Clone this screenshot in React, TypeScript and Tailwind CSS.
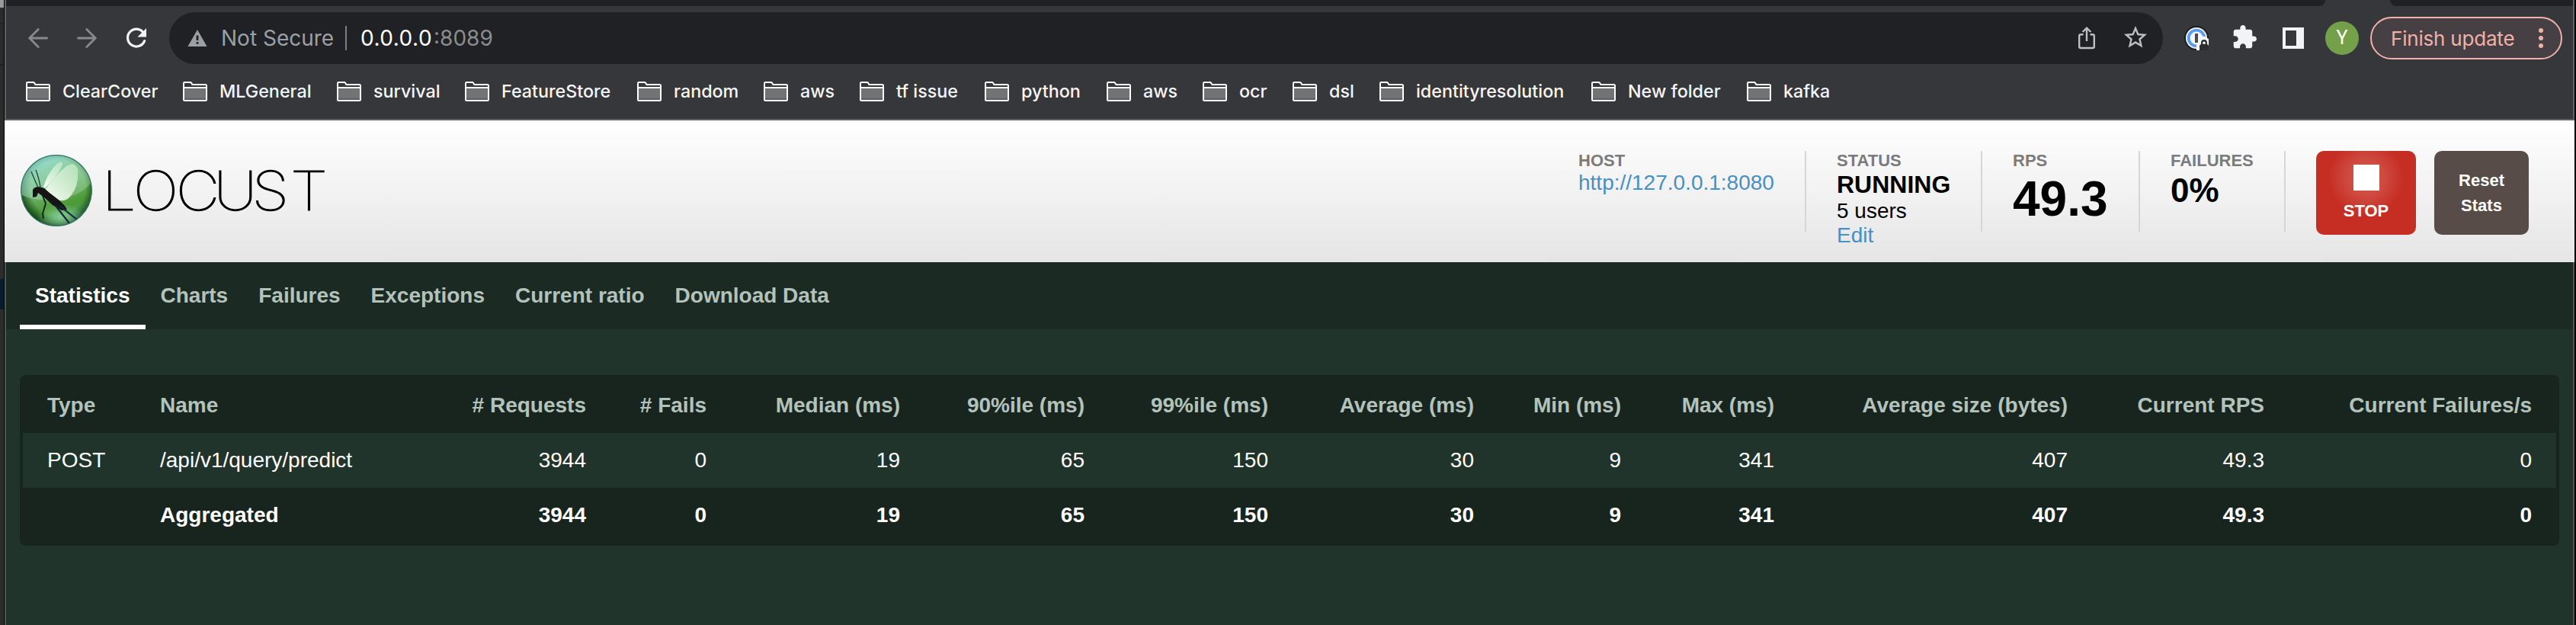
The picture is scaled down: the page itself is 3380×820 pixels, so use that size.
import type { ReactNode } from "react";

const bookmarks: { label: string; width: string }[] = [
  { label: "ClearCover", width: "w-[206px]" },
  { label: "MLGeneral", width: "w-[202px]" },
  { label: "survival", width: "w-[168px]" },
  { label: "FeatureStore", width: "w-[226px]" },
  { label: "random", width: "w-[166px]" },
  { label: "aws", width: "w-[126px]" },
  { label: "tf issue", width: "w-[164px]" },
  { label: "python", width: "w-[160px]" },
  { label: "aws", width: "w-[126px]" },
  { label: "ocr", width: "w-[118px]" },
  { label: "dsl", width: "w-[114px]" },
  { label: "identityresolution", width: "w-[278px]" },
  { label: "New folder", width: "w-[204px]" },
  { label: "kafka", width: "w-[160px]" },
];

const tabs = ["Statistics", "Charts", "Failures", "Exceptions", "Current ratio", "Download Data"];

const columns: { title: string; width: string }[] = [
  { title: "Type", width: "w-[148px]" },
  { title: "Name", width: "w-[410px]" },
  { title: "# Requests", width: "w-[213px]" },
  { title: "# Fails", width: "w-[158px]" },
  { title: "Median (ms)", width: "w-[254px]" },
  { title: "90%ile (ms)", width: "w-[242px]" },
  { title: "99%ile (ms)", width: "w-[241px]" },
  { title: "Average (ms)", width: "w-[270px]" },
  { title: "Min (ms)", width: "w-[193px]" },
  { title: "Max (ms)", width: "w-[201px]" },
  { title: "Average size (bytes)", width: "w-[385px]" },
  { title: "Current RPS", width: "w-[258px]" },
  { title: "Current Failures/s", width: "w-[351px]" },
];

const values = ["3944", "0", "19", "65", "150", "30", "9", "341", "407", "49.3", "0"];

function FolderIcon() {
  return (
    <svg width="32" height="26" viewBox="0 0 32 26" fill="none" className="shrink-0">
      <path d="M1 8h30v16.2H1z" fill="#727375" />
      <path d="M2 22h28v2H2z" fill="#5c5d60" />
      <path
        d="M1 23.5V2.2Q1 1 2.2 1H9.6Q10.6 1 11.2 2L12.4 4H29.5Q31 4 31 5.5V23.5Q31 25 29.5 25H2.5Q1 25 1 23.5ZM1 8H31"
        stroke="#fff"
        strokeWidth="2"
      />
    </svg>
  );
}

function TabStrip() {
  return (
    <div className="flex h-2 bg-[#36373b]">
      <div className="w-[3043px] rounded-br-[8px] bg-[#202124]" />
      <div className="w-[85px]" />
      <div className="grow rounded-bl-[8px] bg-[#202124]" />
    </div>
  );
}

function Toolbar() {
  return (
    <div className="flex h-[84px] items-center">
      <svg width="26" height="26" viewBox="0 0 26 26" className="ml-[29px] shrink-0" fill="none" stroke="#88898b" strokeWidth="2.8" strokeLinecap="round">
        <path d="M24.6 13H1.8M13.2 1.6 1.8 13l11.4 11.4" />
      </svg>
      <svg width="26" height="26" viewBox="0 0 26 26" className="ml-[38px] shrink-0" fill="none" stroke="#88898b" strokeWidth="2.8" strokeLinecap="round">
        <path d="M1.4 13H24.2M12.8 1.6 24.2 13 12.8 24.4" />
      </svg>
      <svg width="28" height="28" viewBox="0 0 28 28" className="ml-[38px] shrink-0" fill="none">
        <path d="M22.6 6.2A11.4 11.4 0 1 0 24.6 17.6" stroke="#f1f3f4" strokeWidth="3.2" strokeLinecap="round" />
        <path d="M27 1v11.6H15.4z" fill="#f1f3f4" />
      </svg>
      <div className="ml-[29px] flex h-[68px] w-[2616px] shrink-0 items-center rounded-full bg-[#202124] pl-6 text-[28px] leading-[34px] whitespace-nowrap">
        <svg width="26" height="22" viewBox="0 0 26 22" className="shrink-0">
          <path d="M13 0 25.6 22H.4z" fill="#9aa0a6" />
          <path d="M11.6 7.5h2.8v6.5h-2.8zM11.6 16h2.8v2.8h-2.8z" fill="#202124" />
        </svg>
        <span className="ml-[18px] w-[163px] text-[#9aa0a6]">Not Secure</span>
        <span className="h-8 w-0.5 bg-[#7f8183]" />
        <span className="ml-[18px] w-[96px] tracking-[0.5px] text-white">0.0.0.0</span>
        <span className="text-[#8b8d90]">:8089</span>
        <svg width="26" height="32" viewBox="0 0 26 32" className="mr-[36px] ml-auto shrink-0" fill="none" stroke="#bdbfc1" strokeWidth="2.4">
          <path d="M8.5 11.2H5.2Q3.2 11.2 3.2 13.2V27Q3.2 29 5.2 29H20.8Q22.8 29 22.8 27V13.2Q22.8 11.2 20.8 11.2H17.5M13 20V3M7.6 8 13 2.6 18.4 8" />
        </svg>
        <svg width="30" height="30" viewBox="2 2 20 20" className="mr-[21px] shrink-0 -translate-y-[1px]" fill="#bdbfc1">
          <path d="M22 9.24l-7.19-.62L12 2 9.19 8.63 2 9.24l5.46 4.73L5.82 21 12 17.27 18.18 21l-1.63-7.03L22 9.24zM12 15.4l-3.76 2.27 1-4.28-3.32-2.88 4.38-.38L12 6.1l1.71 4.04 4.38.38-3.32 2.88 1 4.28L12 15.4z" />
        </svg>
      </div>
      <svg width="34" height="34" viewBox="0 0 34 34" className="ml-[27px] shrink-0">
        <circle cx="17" cy="17" r="16" fill="#1b1c1e" />
        <circle cx="17" cy="17" r="14" fill="#f4f5f7" />
        <circle cx="17" cy="17" r="10.3" fill="none" stroke="#5a9df5" strokeWidth="3.8" />
        <rect x="15" y="11" width="4" height="12" fill="#4a4b4e" />
        <path d="M17 24h4v-6q2-4 7-3l5 3v15H17z" fill="#f4f5f7" />
        <path d="M21 33v-5.5q0-2 2-2.6V23q0-4 4-4t4 4v1.9q2 .6 2 2.6V33zM25.2 24.8h3.6V23q0-1.6-1.8-1.6T25.2 23z" fill="#2c2d30" fillRule="evenodd" />
      </svg>
      <svg width="32" height="32" viewBox="1.5 1 22.2 22.2" className="ml-[31px] shrink-0 -translate-y-[1px]" fill="#f1f3f4">
        <path d="M20.5 11H19V7c0-1.1-.9-2-2-2h-4V3.5C13 2.12 11.88 1 10.5 1S8 2.12 8 3.5V5H4c-1.1 0-1.99.9-1.99 2v3.8H3.5c1.49 0 2.7 1.21 2.7 2.7s-1.21 2.7-2.7 2.7H2V20c0 1.1.9 2 2 2h3.8v-1.5c0-1.49 1.21-2.7 2.7-2.7 1.49 0 2.7 1.21 2.7 2.7V22H17c1.1 0 2-.9 2-2v-4h1.5c1.38 0 2.5-1.12 2.5-2.5S21.88 11 20.5 11z" />
      </svg>
      <div className="ml-[33px] flex h-7 w-7 shrink-0 bg-[#f1f3f4] py-1 pl-1">
        <div className="h-5 w-3.5 bg-[#36373b]" />
      </div>
      <div className="ml-7 flex h-11 w-11 shrink-0 items-center justify-center rounded-full bg-[#74a04a] font-[Roboto] text-[25px] text-white">Y</div>
      <div className="ml-[15px] flex h-14 w-[252px] shrink-0 items-center rounded-full border-2 border-[#f0b1aa] bg-[#464044] pl-[25px] text-[26px] tracking-[-0.2px] whitespace-nowrap text-[#f0b1aa]">
        <span className="w-[194px]">Finish update</span>
        <span className="flex flex-col gap-1">
          <span className="h-1.5 w-1.5 rounded-full bg-[#f0b1aa]" />
          <span className="h-1.5 w-1.5 rounded-full bg-[#f0b1aa]" />
          <span className="h-1.5 w-1.5 rounded-full bg-[#f0b1aa]" />
        </span>
      </div>
    </div>
  );
}

function Bookmarks() {
  return (
    <div className="flex h-16 pt-[15px] pl-[26px]">
      {bookmarks.map((b, i) => (
        <div key={i} className={`${b.width} flex h-[26px] shrink-0 items-center gap-4 text-[23.3px] font-medium whitespace-nowrap text-[#f4f5f6]`}>
          <FolderIcon />
          <span>{b.label}</span>
        </div>
      ))}
    </div>
  );
}

function Logo() {
  return (
    <svg width="410" height="98" viewBox="0 0 410 98" className="shrink-0">
      <defs>
        <linearGradient id="globe" x1="0.25" y1="0" x2="0.6" y2="1">
          <stop offset="0" stopColor="#86d6d2" />
          <stop offset="0.25" stopColor="#7cc083" />
          <stop offset="0.55" stopColor="#66ab5c" />
          <stop offset="0.75" stopColor="#4c9a35" />
          <stop offset="1" stopColor="#4f9f78" />
        </linearGradient>
        <radialGradient id="rim" cx="0.52" cy="0.46" r="0.54">
          <stop offset="0.72" stopColor="#06300a" stopOpacity="0" />
          <stop offset="1" stopColor="#052808" stopOpacity="0.8" />
        </radialGradient>
        <linearGradient id="shine" x1="0" y1="0" x2="1" y2="1">
          <stop offset="0" stopColor="#94dfe0" stopOpacity="0.7" />
          <stop offset="1" stopColor="#b8e4b0" stopOpacity="0.25" />
        </linearGradient>
        <radialGradient id="glow" cx="0.5" cy="0.5" r="0.5">
          <stop offset="0" stopColor="#8ed49a" stopOpacity="0.9" />
          <stop offset="1" stopColor="#8ed49a" stopOpacity="0" />
        </radialGradient>
        <linearGradient id="wing" x1="0" y1="1" x2="0.6" y2="0">
          <stop offset="0" stopColor="#ffffff" stopOpacity="0.95" />
          <stop offset="1" stopColor="#e4f8e0" stopOpacity="0.55" />
        </linearGradient>
        <clipPath id="disc">
          <circle cx="49" cy="49" r="46.5" />
        </clipPath>
      </defs>
      <circle cx="49" cy="49" r="46.5" fill="url(#globe)" />
      <g clipPath="url(#disc)">
        <circle cx="49" cy="49" r="46.5" fill="url(#rim)" />
        <ellipse cx="55" cy="84" rx="32" ry="18" fill="url(#glow)" />
        <path d="M2 54Q18 63 46 61 82 57 95 38L92 20Q78 2 49 2 14 4 3 36Z" fill="url(#shine)" />
        <path d="M32 44Q36 30 46 18 54 9 57 13 57 22 34 46Z" fill="url(#wing)" />
        <path d="M35 47Q46 30 62 17 74 10 77 22 79 44 66 58 56 68 40 55Z" fill="url(#wing)" />
        <path d="M18 48Q20 44 26 44L33 46 40 52 53 62 60 69 63 74 56 75 44 68 33 58 25 52 23 57 18 58Z" fill="#151515" />
        <path d="M25 45Q20 34 16 24M28 45Q26 32 22 22" stroke="#244a3e" strokeWidth="1.4" fill="none" />
        <path d="M31 56 35 66 31 79 32 86" stroke="#13251b" strokeWidth="2" fill="none" />
        <path d="M48 69 66 92M53 69 76 87" stroke="#17283c" strokeWidth="2.2" fill="none" />
      </g>
      <circle cx="49" cy="49" r="46.3" fill="none" stroke="#2c7663" strokeWidth="1.2" />
      <text
        x="97.1 133.8 183.7 227.9 272.7 317.9"
        y="75"
        transform="scale(1.12 1)"
        className="fill-black stroke-black font-[Inter] text-[71px] font-thin"
        strokeWidth="1.2"
      >
        LOCUST
      </text>
    </svg>
  );
}

function Stat({ label, className, children }: { label: string; className: string; children: ReactNode }) {
  return (
    <div className={`${className} h-[106px] shrink-0 border-r-2 border-[#d6d6d6] whitespace-nowrap`}>
      <div className="text-[22px] leading-[25px] font-bold text-[#7b7b7b]">{label}</div>
      {children}
    </div>
  );
}

function Header() {
  return (
    <header className="-mx-0.5 flex h-[186px] bg-linear-to-b from-white to-[#e5e5e5] pr-[60px] pl-[19px]">
      <div className="mt-[43px]">
        <Logo />
      </div>
      <div className="mt-10 ml-auto flex">
        <Stat label="HOST" className="w-[299px]">
          <div className="text-[28px] leading-[33px] text-[#4790c3]">http://127.0.0.1:8080</div>
        </Stat>
        <Stat label="STATUS" className="w-[231px] pl-10">
          <div className="text-[32px] leading-[38px] font-bold text-black">RUNNING</div>
          <div className="text-[28px] leading-8 text-black">5 users</div>
          <div className="text-[28px] leading-8 text-[#4790c3]">Edit</div>
        </Stat>
        <Stat label="RPS" className="w-[207px] pl-10">
          <div className="text-[64px] leading-[76px] font-bold text-black">49.3</div>
        </Stat>
        <Stat label="FAILURES" className="w-[191px] pl-10">
          <div className="text-[44px] leading-[53px] font-bold text-black">0%</div>
        </Stat>
        <button className="ml-10 flex h-[110px] w-[131px] shrink-0 flex-col items-center rounded-[10px] bg-[radial-gradient(circle_at_50%_32%,#d2584e_0px,#cf4c42_22px,#c62d23_50px)] pt-[18px] text-[22px] leading-[33px] font-bold text-white">
          <span className="h-[34px] w-[34px] bg-white" />
          <span className="mt-2.5">STOP</span>
        </button>
        <button className="ml-6 flex h-[110px] w-[124px] shrink-0 flex-col items-center rounded-[10px] bg-[#584c49] pt-[22px] text-[22px] leading-[33px] font-bold text-white">
          <span>Reset</span>
          <span>Stats</span>
        </button>
      </div>
    </header>
  );
}

function NavTabs() {
  return (
    <nav className="flex h-[88px] bg-[#1b2a23] pl-[18px] text-[28px] leading-[88px] font-bold whitespace-nowrap">
      {tabs.map((t, i) => (
        <div key={t} className={i === 0 ? "h-[88px] border-b-6 border-white px-5 text-white" : "px-5 text-[#b3c3bc]"}>
          {t}
        </div>
      ))}
    </nav>
  );
}

function StatsTable() {
  const align = (i: number) => (i < 2 ? "text-left" : "text-right");
  return (
    <div className="mt-[60px] ml-[18px] w-[3332px] rounded-[8px] bg-[#18251f] p-1">
      <table className="w-full table-fixed border-collapse text-[28px] leading-[72px] whitespace-nowrap">
        <thead>
          <tr className="h-[72px] text-[#b3c3bc]">
            {columns.map((c, i) => (
              <th key={c.title} className={`${c.width} ${align(i)} ${i < 2 ? "px-8" : "pr-8"} py-0 font-bold`}>
                {c.title}
              </th>
            ))}
          </tr>
        </thead>
        <tbody className="text-white">
          <tr className="h-[72px] bg-[#21342c]">
            {["POST", "/api/v1/query/predict", ...values].map((v, i) => (
              <td key={i} className={`${align(i)} px-8 py-0`}>{v}</td>
            ))}
          </tr>
          <tr className="h-[72px] font-bold">
            {["", "Aggregated", ...values].map((v, i) => (
              <td key={i} className={`${align(i)} px-8 py-0`}>{v}</td>
            ))}
          </tr>
        </tbody>
      </table>
    </div>
  );
}

export default function App() {
  return (
    <div className="flex h-[820px] w-[3380px] overflow-hidden bg-black">
      <div className="flex w-[5px] shrink-0 flex-col overflow-hidden bg-[#2c2c2d]">
        <div className="h-2.5 bg-[#9a9a9a]" />
        <div className="mt-5 h-0.5 bg-[#222223]" />
        <div className="mt-[52px] h-0.5 bg-[#222223]" />
        <div className="mt-[280px] h-10 bg-[#071c2d]" />
      </div>
      <div className="ml-px flex w-[3372px] shrink-0 flex-col font-['Liberation_Sans',Arial,sans-serif]">
        <div className="h-[158px] border-x-2 border-b-2 border-[#606165] bg-[#36373b] font-[Inter,sans-serif]">
          <TabStrip />
          <Toolbar />
          <Bookmarks />
        </div>
        <div className="grow border-x-2 border-[#4a5a52] bg-[#21342c]">
          <Header />
          <NavTabs />
          <StatsTable />
        </div>
      </div>
    </div>
  );
}
